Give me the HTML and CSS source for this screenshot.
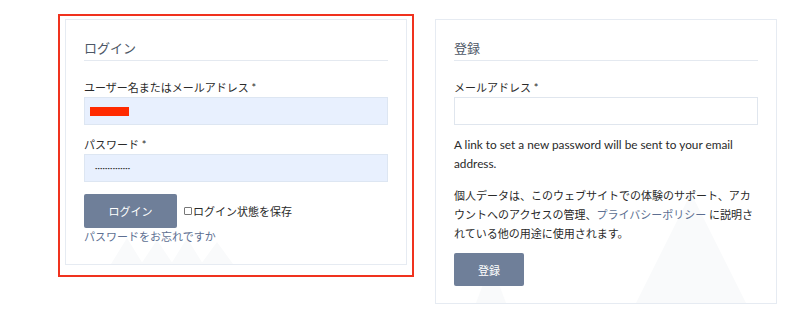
FILE: index.html
```html
<!DOCTYPE html>
<html lang="ja">
<head>
    <meta charset="UTF-8">
    <meta name="viewport" content="width=device-width, initial-scale=1.0">
    <title>アカウント</title>
    <link rel="stylesheet" href="styles.css">
</head>
<body>
    <div class="account-row">
        <div class="highlight">
            <div class="panel">
                <svg class="watermark" width="130" height="26" viewBox="0 0 130 26">
                    <polygon points="0,26 16,0 32,26" />
                    <polygon points="30,26 46,2 62,26" />
                    <polygon points="60,26 76,0 92,26" />
                    <polygon points="90,26 106,4 122,26" />
                </svg>
                <h2 class="panel-title">ログイン</h2>

                <label class="field-label">ユーザー名またはメールアドレス *</label>
                <div class="field autofill"><span class="redact"></span></div>

                <label class="field-label">パスワード *</label>
                <div class="field autofill"><span class="dots">••••••••••••••</span></div>

                <div class="login-row">
                    <button class="btn">ログイン</button>
                    <label class="remember"><span class="box"></span>ログイン状態を保存</label>
                </div>
                <a href="#" class="lost-link">パスワードをお忘れですか</a>
            </div>
        </div>

        <div class="panel register">
            <svg class="watermark big" width="300" height="110" viewBox="0 0 300 110">
                <polygon points="30,110 45,70 60,110" />
                <polygon points="190,110 245,0 300,110" />
            </svg>
            <h2 class="panel-title">登録</h2>

            <label class="field-label">メールアドレス *</label>
            <input type="email" class="field">

            <p class="note latin">A link to set a new password will be sent to your email address.</p>
            <p class="note privacy">個人データは、このウェブサイトでの体験のサポート、アカウントへのアクセスの管理、<a href="#">プライバシーポリシー</a> に説明されている他の用途に使用されます。</p>

            <button class="btn">登録</button>
        </div>
    </div>
</body>
</html>
```

FILE: styles.css
```css
body {
    margin: 0;
    font-family: Lato, "Noto Sans CJK JP", sans-serif;
    font-size: 11px;
    color: #2a2a2a;
    background: #ffffff;
}

.account-row {
    display: flex;
    align-items: flex-start;
    gap: 21px;
    padding: 14px 0 0 58px;
}

.highlight {
    border: 2px solid #f0321e;
    padding: 3px 5px 10px 5px;
}

.panel {
    position: relative;
    width: 304px;
    padding: 18px 18px 18px 18px;
    border: 1px solid #e6ebf2;
    background: #ffffff;
    display: flex;
    flex-direction: column;
    align-items: flex-start;
}

.register {
    margin-top: 5px;
    padding-bottom: 17px;
}

.watermark {
    position: absolute;
    fill: #f9fafb;
    left: 45px;
    bottom: 0;
}

.watermark.big {
    left: 10px;
}

.panel > *:not(.watermark) {
    position: relative;
}

.panel-title {
    margin: 0;
    width: 100%;
    font-size: 13px;
    font-weight: normal;
    line-height: 20px;
    color: #4d5766;
    padding-bottom: 2px;
    border-bottom: 1px solid #e4e9f0;
}

.field-label {
    margin-top: 18px;
    line-height: 18px;
}

.field {
    box-sizing: border-box;
    width: 100%;
    height: 28px;
    margin: 0;
    padding: 0 10px;
    border: 1px solid #e0e6ee;
    background: #ffffff;
    display: flex;
    align-items: center;
    font: inherit;
}

.autofill {
    background: #e8f0fe;
    border-color: #dde6f2;
}

.autofill + .field-label {
    margin-top: 11px;
}

.redact {
    display: block;
    width: 39px;
    height: 9px;
    margin-left: -5px;
    background: #ff2a00;
}

.dots {
    font-size: 4px;
    letter-spacing: 0.2px;
    color: #333333;
}

.login-row {
    display: flex;
    align-items: center;
    gap: 7px;
    margin-top: 12px;
}

.btn {
    border: none;
    border-radius: 2px;
    background: #6f7f99;
    color: #ffffff;
    font: inherit;
    height: 34px;
    width: 93px;
    cursor: pointer;
}

.register .btn {
    width: 70px;
    height: 33px;
    margin-top: 10px;
}

.remember {
    display: flex;
    align-items: center;
    font-size: 11px;
}

.box {
    width: 6px;
    height: 6px;
    border: 1px solid #777777;
    border-radius: 1px;
    margin-right: 1px;
}

.lost-link {
    line-height: 18px;
    color: #5d6f92;
    text-decoration: none;
}

.note {
    margin: 10px 0 0 0;
    line-height: 19px;
}

.latin {
    font-size: 11.8px;
}

.privacy {
    margin-top: 13px;
}

.note a {
    color: #5d6f92;
    text-decoration: none;
}
```
